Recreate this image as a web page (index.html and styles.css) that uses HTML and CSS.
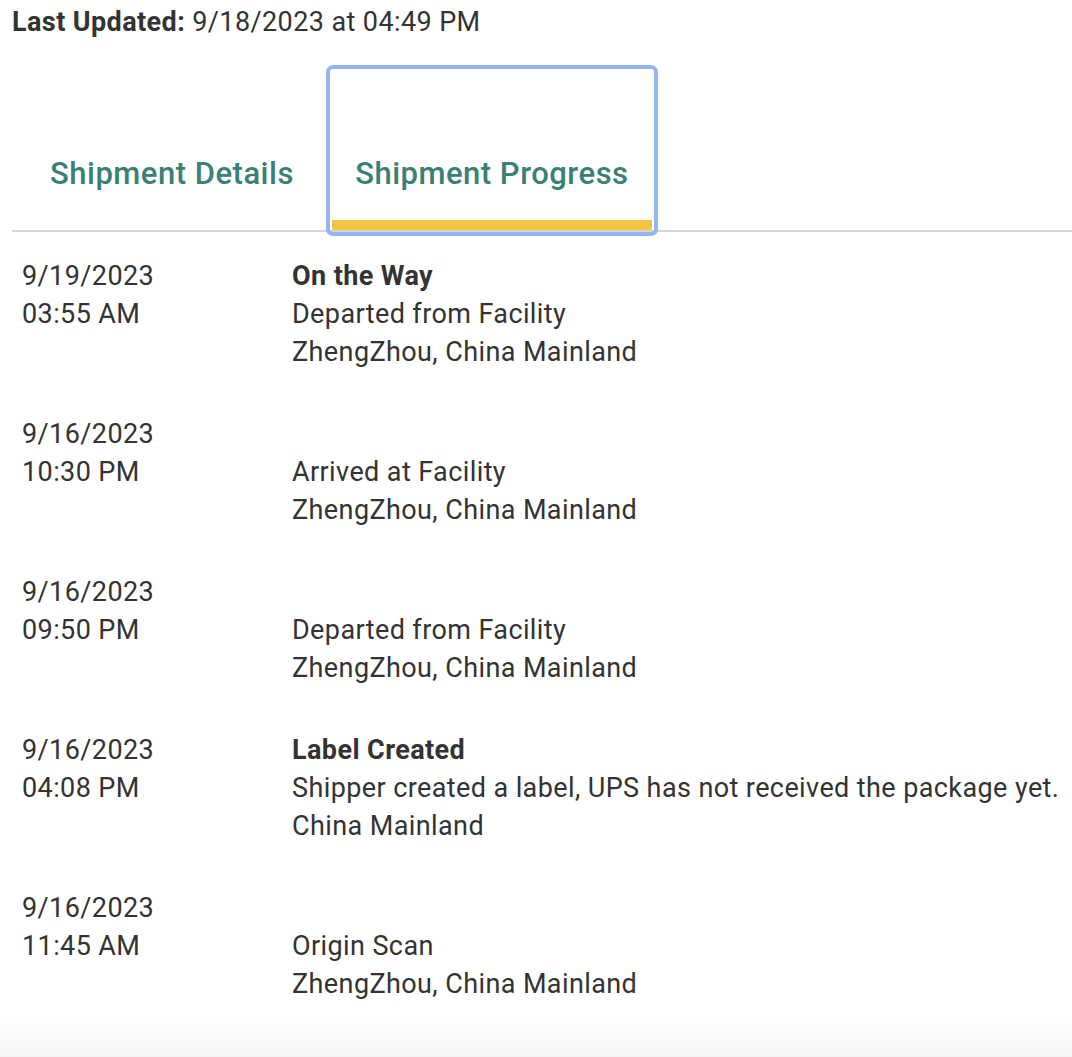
FILE: index.html
```html
<!DOCTYPE html>
<html>
<head>
<meta charset="utf-8">
<link rel="stylesheet" href="styles.css">
</head>
<body>
<div class="page">
  <div class="updated"><span class="label">Last Updated:</span> 9/18/2023 at 04:49 PM</div>
  <div class="tabs">
    <div class="tab">Shipment Details</div>
    <div class="tab active">Shipment Progress</div>
  </div>
  <div class="events">
    <div class="event">
      <div class="when"><div>9/19/2023</div><div>03:55 AM</div></div>
      <div class="what"><div class="status">On the Way</div><div>Departed from Facility</div><div>ZhengZhou, China Mainland</div></div>
    </div>
    <div class="event">
      <div class="when"><div>9/16/2023</div><div>10:30 PM</div></div>
      <div class="what"><div class="status">&nbsp;</div><div>Arrived at Facility</div><div>ZhengZhou, China Mainland</div></div>
    </div>
    <div class="event">
      <div class="when"><div>9/16/2023</div><div>09:50 PM</div></div>
      <div class="what"><div class="status">&nbsp;</div><div>Departed from Facility</div><div>ZhengZhou, China Mainland</div></div>
    </div>
    <div class="event">
      <div class="when"><div>9/16/2023</div><div>04:08 PM</div></div>
      <div class="what"><div class="status">Label Created</div><div>Shipper created a label, UPS has not received the package yet.</div><div>China Mainland</div></div>
    </div>
    <div class="event">
      <div class="when"><div>9/16/2023</div><div>11:45 AM</div></div>
      <div class="what"><div class="status">&nbsp;</div><div>Origin Scan</div><div>ZhengZhou, China Mainland</div></div>
    </div>
  </div>
</div>
<div class="fade"></div>
</body>
</html>
```
FILE: styles.css
```css
html, body {
  margin: 0;
  padding: 0;
  background: #fff;
}
body {
  font-family: Roboto, "Liberation Sans", sans-serif;
  color: #333;
  width: 1072px;
  height: 1057px;
  overflow: hidden;
  position: relative;
}
.page {
  padding-left: 12px;
}
.updated {
  font-size: 27px;
  line-height: 32px;
  letter-spacing: 0.4px;
  padding-top: 6px;
}
.updated .label {
  font-weight: 700;
}
.tabs {
  display: flex;
  margin-top: 33px;
  border-bottom: 2px solid #d6d6d6;
}
.tab {
  font-size: 31px;
  line-height: 36px;
  font-weight: 500;
  letter-spacing: 0.5px;
  color: #3b8076;
  height: 159px;
  box-sizing: border-box;
  display: flex;
  align-items: flex-end;
  padding: 0 38px 38px 38px;
}
.tab.active {
  width: 320px;
  padding: 0 0 28px 0;
  justify-content: center;
  border-bottom: 10px solid #f5c342;
  outline: 4px solid #94b4f4;
  outline-offset: 2px;
  border-radius: 1px;
}
.events {
  padding-left: 10px;
  padding-top: 25px;
}
.event {
  display: flex;
  font-size: 27px;
  letter-spacing: 0.4px;
  line-height: 38px;
  margin-bottom: 44px;
}
.when {
  width: 270px;
}
.status {
  font-weight: 700;
}
.fade {
  position: absolute;
  left: 0;
  right: 0;
  bottom: 0;
  height: 36px;
  background: linear-gradient(#fff, #f4f4f4);
}
```
